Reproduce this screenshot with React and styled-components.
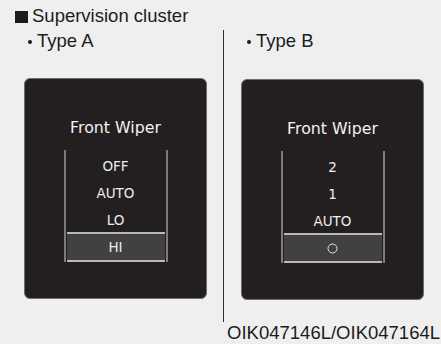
import styled, { createGlobalStyle } from 'styled-components';

const GlobalStyle = createGlobalStyle`
  html, body {
    margin: 0;
    padding: 0;
    background: #efefef;
  }
  body {
    font-family: "Liberation Sans", Arial, sans-serif;
    color: #1c1c1c;
  }
`;

const Page = styled.div`
  width: 441px;
  height: 344px;
  padding-top: 5px;
  box-sizing: border-box;
  overflow: hidden;
`;

const Header = styled.div`
  display: flex;
  align-items: center;
  gap: 4px;
  padding-left: 15px;
  font-size: 18.5px;
  line-height: 22px;
  height: 22px;
`;

const Square = styled.span`
  display: block;
  width: 13px;
  height: 12px;
  background: #1c1c1c;
  margin-top: 1px;
`;

const Columns = styled.div`
  display: grid;
  grid-template-columns: 223px 1fr;
  margin-top: 3px;
`;

const Column = styled.div`
  display: flex;
  flex-direction: column;
  height: 292px;
  padding-left: ${p => p.$pad}px;
  border-left: ${p => (p.$divider ? '1px solid #2e2e2e' : 'none')};
`;

const TypeLabel = styled.div`
  display: flex;
  align-items: center;
  gap: 5px;
  font-size: 18.5px;
  line-height: 22px;
  height: 22px;
  margin-left: ${p => p.$indent}px;
`;

const Bullet = styled.span`
  display: block;
  width: 4px;
  height: 4px;
  border-radius: 50%;
  background: #1c1c1c;
  margin-top: 2px;
`;

const Panel = styled.div`
  width: 183px;
  height: 221px;
  box-sizing: border-box;
  margin-top: ${p => p.$top}px;
  background: #231f20;
  border: 1px solid #6e6e6e;
  border-radius: 6px;
  display: flex;
  flex-direction: column;
  align-items: center;
  padding-top: 39px;
  font-family: "DejaVu Sans", "Noto Sans", sans-serif;
  color: #f2f2f2;
`;

const Title = styled.div`
  font-size: 15.8px;
  line-height: 20px;
`;

const List = styled.div`
  width: 104px;
  box-sizing: border-box;
  margin-top: 12px;
  padding-top: 3px;
  border-left: 2px solid #7c7c7c;
  border-right: 2px solid #7c7c7c;
  display: flex;
  flex-direction: column;
`;

const Item = styled.div`
  height: 27px;
  line-height: 27px;
  text-align: center;
  font-size: 13.5px;
  color: #ececec;
`;

const Selected = styled.div`
  height: 30px;
  box-sizing: border-box;
  margin: -2px 1px 0;
  border-top: 2px solid #b8b8b8;
  border-bottom: 2px solid #b8b8b8;
  background: #414141;
  display: flex;
  align-items: center;
  justify-content: center;
  font-size: 13.5px;
  color: #ececec;
`;

const Caption = styled.div`
  text-align: right;
  padding-right: 1px;
  font-size: 18.5px;
  line-height: 22px;
`;

const OffIcon = () => (
  <svg width="11" height="11" viewBox="0 0 11 11">
    <circle cx="5.5" cy="5.5" r="4.5" fill="none" stroke="#e6e6e6" strokeWidth="1" />
  </svg>
);

const Cluster = ({ items, selected, top }) => (
  <Panel $top={top}>
    <Title>Front Wiper</Title>
    <List>
      {items.map(item => (
        <Item key={item}>{item}</Item>
      ))}
      <Selected>{selected}</Selected>
    </List>
  </Panel>
);

export default function App() {
  return (
    <>
      <GlobalStyle />
      <Page>
        <Header>
          <Square />
          Supervision cluster
        </Header>
        <Columns>
          <Column $pad={24}>
            <TypeLabel $indent={4}>
              <Bullet />
              Type A
            </TypeLabel>
            <Cluster items={['OFF', 'AUTO', 'LO']} selected="HI" top={26} />
          </Column>
          <Column $pad={17} $divider>
            <TypeLabel $indent={6}>
              <Bullet />
              Type B
            </TypeLabel>
            <Cluster items={['2', '1', 'AUTO']} selected={<OffIcon />} top={27} />
          </Column>
        </Columns>
        <Caption>OIK047146L/OIK047164L</Caption>
      </Page>
    </>
  );
}
